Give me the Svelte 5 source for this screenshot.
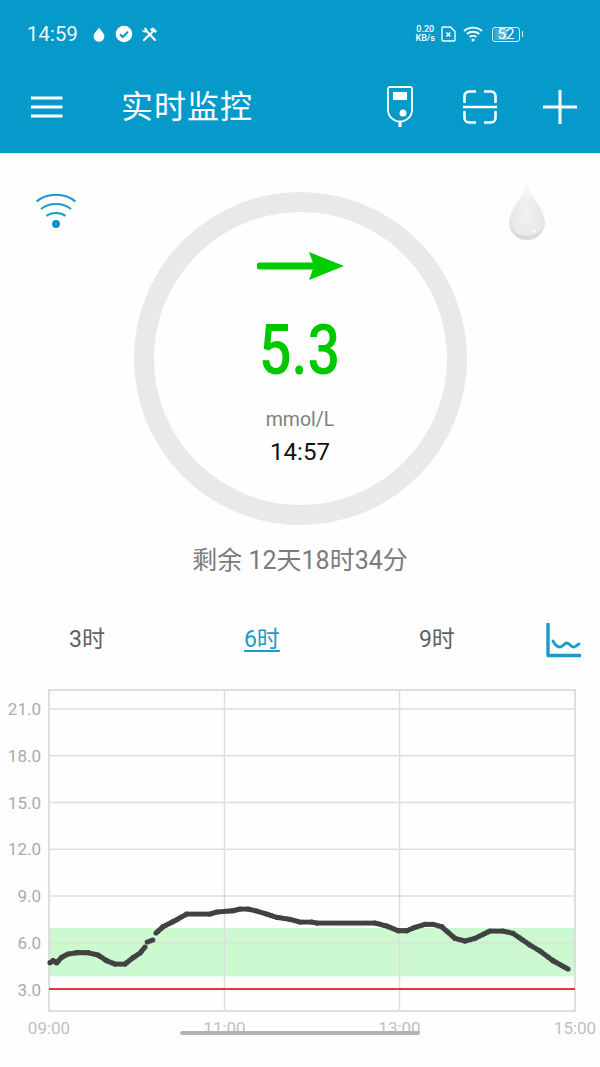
<script>
	const cjk = 'Roboto, "Noto Sans CJK SC", sans-serif';
	const chartTop = 680;

	const yTicks = [21, 18, 15, 12, 9, 6, 3];
	const xTicks = [
		{ x: 49, label: '09:00' },
		{ x: 224.5, label: '11:00' },
		{ x: 399.5, label: '13:00' },
		{ x: 575, label: '15:00' }
	];

	const yFor = (v) => 989.5 - (v - 3) * 15.58 - chartTop;

	// readings traced off the curve, gaps split into separate runs
	const runs = [
		[[50,962.7],[53,960.7],[56.7,962.7],[61.7,957.3],[68,954],[76.7,952.7],[88,952.7],[98,955],[106.7,960.7],[115,964],[125,964],[133,957.7],[140,953],[145,947]],
		[[147.3,942],[152.7,940]],
		[[156,933],[163,926.7],[173,921.7],[186.7,914],[210,914],[216.7,912],[233,910.7],[240,909],[248,909],[256.7,911],[266.7,914],[276.7,917.3],[290,919.3],[300,922],[311.7,922],[316.7,923],[375,923],[386.7,926],[398.3,930.7],[406.7,930.7],[415,927.3],[425,924.3],[433,924.3],[441.7,926.7],[455,938.3],[465,941],[475,938.3],[490,931],[503,931],[513,933.3],[530,945],[540,951],[553,960.7],[568,969]]
	];

	const dots = [];
	for (const run of runs) {
		for (let i = 0; i < run.length - 1; i++) {
			const [x1, y1] = run[i];
			const [x2, y2] = run[i + 1];
			const steps = Math.max(1, Math.round(Math.hypot(x2 - x1, y2 - y1) / 2.6));
			for (let s = 0; s <= steps; s++) {
				dots.push({ x: x1 + ((x2 - x1) * s) / steps, y: y1 + ((y2 - y1) * s) / steps - chartTop });
			}
		}
	}
</script>

<div class="page">
	<header class="appbar">
		<div class="status">
			<div class="status-left">
				<span class="clock">14:59</span>
				<svg class="s-drop" width="14" height="15" viewBox="0 0 14 15"><path d="M7 .5C5 3.500 1.600 6.600 1.600 9.600a5.400 5.200 0 0 0 10.800 0C12.400 6.600 9 3.500 7 .5z" fill="#fff"/></svg>
				<svg class="s-check" width="18" height="18" viewBox="0 0 18 18"><circle cx="9" cy="9" r="8.300" fill="#fff"/><path d="M5 9.200l2.800 2.800L13 6.600" fill="none" stroke="#069acb" stroke-width="2"/></svg>
				<svg class="s-tools" width="17" height="15" viewBox="0 0 17 15"><path d="M5 3.500l9 9.500M11 5.500L3 13" stroke="#fff" stroke-width="2.200" stroke-linecap="round"/><path d="M9 2l3-1.500 4 3.500-1.500 2-1.500-1-1.500 1-1-1.500z" fill="#fff"/><path d="M1 2.500l1.500 1.500 1.500-1.500L2.800 1C4.500.2 6.500 1.500 6.300 3.500L5 5.500C3 6 .6 4.500 1 2.500z" fill="#fff"/></svg>
			</div>
			<div class="status-right">
				<div class="speed"><span>0.20</span><span>KB/s</span></div>
				<svg width="15" height="16" viewBox="0 0 15 16"><path d="M1 2a1 1 0 0 1 1-1h7.500L14 5.500V14a1 1 0 0 1-1 1H2a1 1 0 0 1-1-1z" fill="none" stroke="#fff" stroke-width="1.300"/><path d="M5.300 6.500l4 4M9.300 6.500l-4 4" stroke="#fff" stroke-width="1.500"/></svg>
				<svg class="s-wifi" width="20" height="16" viewBox="0 0 20 16"><g fill="none" stroke="#fff" stroke-width="1.800"><path d="M1 5c5-4.400 13-4.400 18 0"/><path d="M3.800 8c3.400-3 9-3 12.400 0"/><path d="M6.600 11c1.900-1.600 4.900-1.600 6.800 0"/></g><circle cx="10" cy="14" r="1.500" fill="#fff"/></svg>
				<div class="battery"><span class="level"></span><span class="num">52</span></div>
			</div>
		</div>
		<div class="toolbar">
			<svg class="menu" width="32" height="22" viewBox="0 0 32 22"><path d="M0 2h31.500M0 11h31.500M0 20h31.500" stroke="#fff" stroke-width="3"/></svg>
			<h1>实时监控</h1>
			<div class="actions">
				<svg class="device" width="26" height="42" viewBox="0 0 26 42"><path d="M3 1h20a2 2 0 0 1 2 2v21a12 11.500 0 0 1-24 0V3a2 2 0 0 1 2-2z" fill="none" stroke="#fff" stroke-width="1.800"/><rect x="6" y="6" width="14" height="8" fill="#fff"/><circle cx="16" cy="27" r="3.500" fill="#fff"/><path d="M13 35.500V41" stroke="#fff" stroke-width="3"/></svg>
				<svg width="34" height="34" viewBox="0 0 34 34"><g fill="none" stroke="#fff" stroke-width="2.600" stroke-linecap="round"><path d="M1.500 12V6a4.500 4.500 0 0 1 4.500-4.500h6M22 1.500h6a4.500 4.500 0 0 1 4.500 4.500v6M1.500 22v6a4.500 4.500 0 0 0 4.500 4.500h6M22 32.500h6a4.500 4.500 0 0 0 4.500-4.500v-6"/></g><path d="M0 17h34" stroke="#fff" stroke-width="2.600"/></svg>
				<svg width="34" height="34" viewBox="0 0 34 34"><path d="M0 17h34M17 0v34" stroke="#fff" stroke-width="3"/></svg>
			</div>
		</div>
	</header>

	<section class="monitor">
		<svg class="signal" width="42" height="38" viewBox="0 0 42 38"><g fill="none" stroke="#1a9bc8" stroke-width="2"><path d="M1.500 10.500c10.500-9 28.500-9 39 0"/><path d="M6 18c8-6.600 22-6.600 30 0"/><path d="M11.500 25c5-4 14-4 19 0"/></g><circle cx="21" cy="33" r="4" fill="#0a95c6"/></svg>
		<svg class="drop" width="40" height="62" viewBox="0 0 40 62"><defs><radialGradient id="dropfill" cx="0.500" cy="0.550" r="0.600"><stop offset="0" stop-color="#f1f1f1"/><stop offset="0.700" stop-color="#e8e8e8"/><stop offset="1" stop-color="#e0e0e0"/></radialGradient><linearGradient id="dropfade" x1="0" y1="0" x2="0" y2="1"><stop offset="0" stop-color="#fff"/><stop offset="0.400" stop-color="#fff" stop-opacity="0"/></linearGradient></defs><g class="drop-shape"><path d="M20 1C18 14 2 28 2 42a18 17 0 0 0 36 0C38 28 22 14 20 1z" fill="url(#dropfill)"/><path d="M20 1C18 14 2 28 2 42a18 17 0 0 0 36 0C38 28 22 14 20 1z" fill="url(#dropfade)"/><path d="M4 44c1 7 8 11 16 11s15-4 16-11c-1 10-7 15-16 15S5 54 4 44z" fill="#dadada"/><circle cx="27" cy="50" r="1.800" fill="#fafafa"/></g></svg>

		<div class="ring">
			<svg class="trend" width="88" height="30" viewBox="0 0 88 30"><path d="M3 15h55" stroke="#00cc00" stroke-width="7" stroke-linecap="round"/><path d="M52 1l35 14-35 14 5-14z" fill="#00cc00"/></svg>
			<div class="value"><span>5.3</span></div>
			<div class="unit">mmol/L</div>
			<div class="time">14:57</div>
		</div>
		<p class="remain">剩余 12天18时34分</p>
	</section>

	<nav class="ranges">
		<span class="range">3时</span>
		<span class="range active">6时</span>
		<span class="range">9时</span>
		<svg class="chart-toggle" width="35" height="35" viewBox="0 0 35 35"><path d="M2 1v31.500h32" fill="none" stroke="#1a9bc8" stroke-width="3.400" stroke-linecap="round" stroke-linejoin="round"/><path d="M7 18c2 4 4 6 7 6s4-4 7-4 4 5 7 4 3-2 5-3" fill="none" stroke="#1a9bc8" stroke-width="2.800" stroke-linecap="round"/></svg>
	</nav>

	<svg class="chart" width="600" height="365" viewBox="0 0 600 365" style:font-family={cjk}>
		<rect x="49.500" y={928 - chartTop} width="525" height="48.300" fill="#ccf9cf"/>
		<rect x="49" y={690 - chartTop} width="526" height="321" fill="none" stroke="#dedede" stroke-width="2"/>
		{#each yTicks as tick}
			<line x1="49" x2="575" y1={yFor(tick)} y2={yFor(tick)} stroke="#dddddd" stroke-width="1.500" opacity={tick === 6 ? 0.8 : 1}/>
			<text class="ylabel" x="41" y={yFor(tick) + 6} text-anchor="end">{tick.toFixed(1)}</text>
		{/each}
		{#each xTicks.slice(1, 3) as tick}
			<line x1={tick.x} x2={tick.x} y1={690 - chartTop} y2={1011 - chartTop} stroke="#dddddd" stroke-width="1.500"/>
		{/each}
		<line x1="49" x2="575" y1={989 - chartTop} y2={989 - chartTop} stroke="#e53935" stroke-width="2"/>
		{#each dots as dot}
			<circle cx={dot.x} cy={dot.y} r="2.600" fill="#424242"/>
		{/each}
		{#each xTicks as tick}
			<text class="xlabel" x={tick.x} y={1034 - chartTop} text-anchor="middle">{tick.label}</text>
		{/each}
	</svg>

	<div class="gesture"></div>
</div>

<style>
	:global(body) {
		margin: 0;
		background: #fff;
	}

	.page {
		position: relative;
		width: 600px;
		height: 1067px;
		overflow: hidden;
		background: #fefefe;
		font-family: Roboto, "Noto Sans CJK SC", sans-serif;
	}

	.appbar {
		height: 153px;
		background: #069acb;
		box-sizing: border-box;
		padding-top: 20px;
		color: #fff;
		box-shadow: 0 1px 2px rgba(0, 0, 0, 0.08);
	}

	.status {
		display: flex;
		justify-content: space-between;
		align-items: center;
		height: 28px;
		padding: 0 80px 0 27px;
	}

	.status-left,
	.status-right {
		display: flex;
		align-items: center;
	}

	.clock {
		font-size: 20.500px;
		margin-right: 14px;
		opacity: 0.95;
	}

	.s-check {
		margin-left: 9px;
	}

	.s-tools {
		margin-left: 8px;
	}

	.speed {
		display: flex;
		flex-direction: column;
		align-items: center;
		font-size: 9px;
		line-height: 9px;
		margin-right: 6px;
		font-weight: 500;
	}

	.s-wifi {
		margin: 0 9px 0 7px;
	}

	.battery {
		position: relative;
		width: 26px;
		height: 13px;
		border: 1.500px solid #d8f0f8;
		border-radius: 3px;
		font-size: 15px;
		line-height: 13px;
		text-align: center;
	}

	.battery::after {
		content: '';
		position: absolute;
		right: -4px;
		top: 3px;
		width: 1.500px;
		height: 6px;
		background: #d8f0f8;
	}

	.battery .level {
		position: absolute;
		left: 1px;
		top: 1px;
		bottom: 1px;
		width: 13px;
		background: linear-gradient(90deg, rgba(255, 255, 255, 0.15), rgba(255, 255, 255, 0.45));
	}

	.battery .num {
		position: relative;
	}

	.toolbar {
		display: flex;
		align-items: center;
		height: 64px;
		margin-top: 27px;
		padding-left: 31px;
	}

	.toolbar h1 {
		margin: 0 0 0 58px;
		font-size: 32px;
		font-weight: 400;
		line-height: 40px;
		letter-spacing: 1px;
	}

	.actions {
		display: flex;
		align-items: center;
		margin-left: auto;
		gap: 46px;
		padding-right: 23px;
	}

	.device {
		margin-right: 4px;
	}

	.monitor {
		position: relative;
		display: flex;
		flex-direction: column;
		align-items: center;
		padding-top: 39px;
	}

	.signal {
		position: absolute;
		left: 35px;
		top: 38px;
	}

	.drop {
		position: absolute;
		left: 507px;
		top: 28px;
	}

	.drop-shape {
		filter: blur(0.7px);
	}

	.ring {
		box-sizing: border-box;
		width: 333px;
		height: 333px;
		border: 20px solid #e9e9e9;
		border-radius: 50%;
		display: flex;
		flex-direction: column;
		align-items: center;
	}

	.trend {
		margin-top: 39px;
		margin-left: 1px;
	}

	.value {
		margin-top: 30px;
		font-size: 70px;
		line-height: 78px;
		color: #00c800;
	}

	.value span {
		display: inline-block;
		font-weight: 500;
		transform: scaleX(0.82);
	}

	.unit {
		margin-top: 19px;
		font-size: 19.500px;
		line-height: 24px;
		color: #808080;
	}

	.time {
		margin-top: 5px;
		font-size: 24px;
		line-height: 30px;
		color: #111;
	}

	.remain {
		margin: 20px 0 0;
		font-size: 25px;
		line-height: 32px;
		color: #7b7b7b;
	}

	.ranges {
		position: relative;
		display: flex;
		height: 36px;
		margin-top: 45px;
		align-items: center;
		padding-left: 69px;
		gap: 139px;
	}

	.range {
		font-size: 23px;
		color: #606060;
		line-height: 30px;
	}

	.range.active {
		color: #1a9bc8;
		text-decoration: underline;
		text-underline-offset: 3px;
	}

	.chart-toggle {
		position: absolute;
		left: 546px;
		top: 1px;
	}

	.chart {
		display: block;
		margin-top: 22px;
	}

	.ylabel {
		font-size: 17px;
		fill: #aaaaaa;
	}

	.xlabel {
		font-size: 17px;
		fill: #c0c0c0;
	}

	.gesture {
		position: absolute;
		left: 180px;
		top: 1031px;
		width: 240px;
		height: 4px;
		border-radius: 2px;
		background: #b4b4b4;
	}
</style>
